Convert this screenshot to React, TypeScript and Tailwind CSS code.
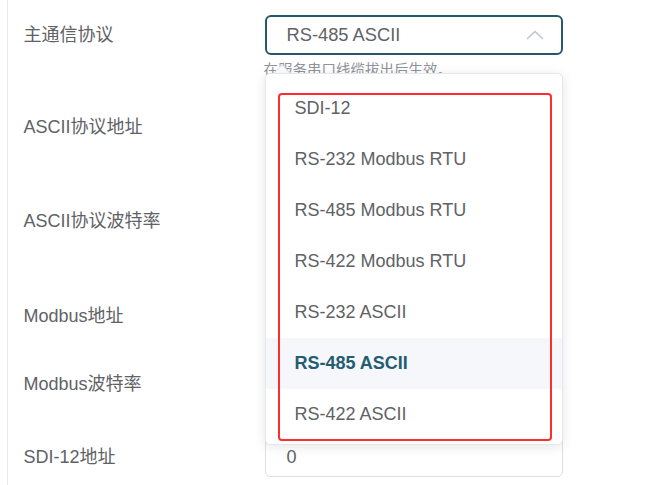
import React from "react";

const options = [
  "SDI-12",
  "RS-232 Modbus RTU",
  "RS-485 Modbus RTU",
  "RS-422 Modbus RTU",
  "RS-232 ASCII",
  "RS-485 ASCII",
  "RS-422 ASCII",
];

const font = { fontFamily: '"Liberation Sans", "Noto Sans CJK SC", Arial, sans-serif' };

function Row({ label, h, children }: { label: string; h: string; children?: React.ReactNode }) {
  return (
    <div className={`flex items-start ${h}`}>
      <div className="w-[256.5px] shrink-0 pl-[15.5px] h-[40px] flex items-center text-[18px] text-[#606266] leading-none">
        {label}
      </div>
      <div className="w-[298px] relative">{children}</div>
    </div>
  );
}

function Input({ value }: { value?: string }) {
  return (
    <div className="h-[40px] w-[298px] border border-[#dcdfe6] rounded-[5px] bg-white flex items-center pl-[21px] text-[18px] text-[#606266]">
      {value}
    </div>
  );
}

export default function App() {
  return (
    <div className="w-[666px] h-[485px] bg-white overflow-hidden pl-[7px]" style={font}>
      <div className="h-[485px] border-l-[1.5px] border-[#e8eaef] pt-[15px]">
        <Row label="主通信协议" h="h-[92px]">
          <div className="h-[40px] w-[298px] border-2 border-[#24596b] rounded-[6px] flex items-center justify-between pl-[20px] pr-[17px] text-[18.3px] text-[#606266]">
            <span>RS-485 ASCII</span>
            <svg width="18" height="10" viewBox="0 0 18 10" fill="none">
              <polyline points="1,9 9,1.5 17,9" stroke="#c0c4cc" strokeWidth="1.6" fill="none" />
            </svg>
          </div>
          <div className="mt-[5px] text-[14.5px] leading-[20px] text-[#909399] whitespace-nowrap -ml-[1px]">
            在服务串口线缆拔出后生效。
          </div>
          <div className="absolute left-0 top-[58px] w-[298px] h-[372px] z-10">
            <div className="absolute left-[11px] -top-[6px] w-[12px] h-[12px] rotate-45 bg-white border-t border-l border-[#e4e7ed]" />
            <div className="relative h-full bg-white border border-[#e4e7ed] rounded-[5px] shadow-[0_2px_12px_0_rgba(0,0,0,0.1)] pt-[9px] overflow-hidden">
              {options.map((o) => {
                const sel = o === "RS-485 ASCII";
                return (
                  <div
                    key={o}
                    className={`h-[51px] flex items-center pl-[29px] text-[18px] ${
                      sel ? "bg-[#f5f7fa] text-[#245d72] font-bold" : "text-[#606266]"
                    }`}
                  >
                    {o}
                  </div>
                );
              })}
              <div className="absolute left-[12px] top-[19px] w-[274px] h-[348px] border-2 border-[#ff2d2d] rounded-[4px] pointer-events-none" />
            </div>
          </div>
        </Row>
        <Row label="ASCII协议地址" h="h-[94px]">
          <Input />
        </Row>
        <Row label="ASCII协议波特率" h="h-[95px]">
          <Input />
        </Row>
        <Row label="Modbus地址" h="h-[68px]">
          <Input />
        </Row>
        <Row label="Modbus波特率" h="h-[73px]">
          <Input />
        </Row>
        <Row label="SDI-12地址" h="h-[40px]">
          <Input value="0" />
        </Row>
      </div>
    </div>
  );
}
